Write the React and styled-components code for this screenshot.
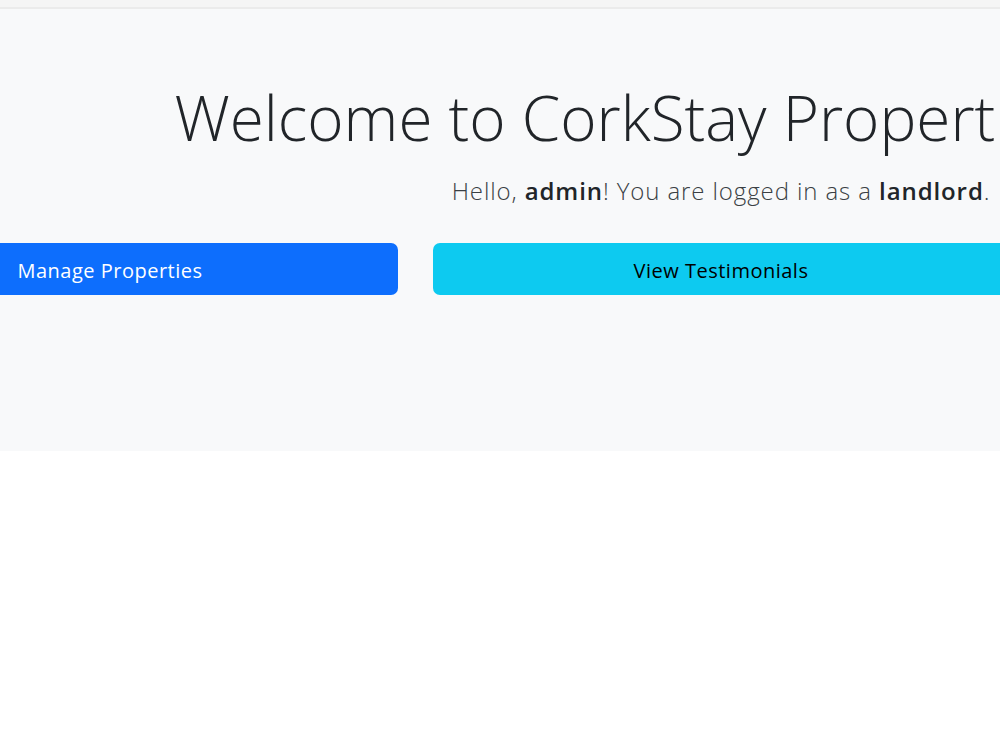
import React from "react";
import styled, { createGlobalStyle } from "styled-components";

const Global = createGlobalStyle`
  html, body { margin: 0; padding: 0; overflow: hidden; background: #ffffff; }
  body { font-family: "Open Sans", "Noto Sans", "Liberation Sans", sans-serif; color: #212529; }
  * { box-sizing: border-box; }
`;

const Page = styled.div`
  width: 1442px;
  display: flex;
  flex-direction: column;
`;

const TopBar = styled.div`
  height: 9px;
  background: #f5f5f5;
  border-bottom: 2px solid #ebebeb;
`;

const Hero = styled.section`
  background: #f8f9fa;
  padding: 71px 0 156px;
  display: flex;
  flex-direction: column;
  align-items: center;
  text-align: center;
`;

const Title = styled.h1`
  margin: 0;
  font-size: 62px;
  font-weight: 300;
  line-height: 1.2;
  color: #212529;
  white-space: nowrap;
`;

const Lead = styled.p`
  margin: 19px 0 0;
  font-size: 24px;
  font-weight: 300;
  line-height: 1.5;
  letter-spacing: 0.9px;
  color: #3a3f44;
  white-space: nowrap;

  strong {
    font-weight: 600;
    color: #212529;
  }
`;

const ButtonRow = styled.div`
  align-self: stretch;
  margin-top: 34px;
  display: flex;
  justify-content: center;
`;

const ButtonGrid = styled.div`
  flex: none;
  width: 1798px;
  display: grid;
  grid-template-columns: repeat(3, 576px);
  column-gap: 35px;
`;

const ActionButton = styled.a`
  display: flex;
  align-items: center;
  justify-content: center;
  height: 52px;
  border-radius: 7px;
  font-size: 20px;
  font-weight: 400;
  letter-spacing: 0.5px;
  padding-top: 2px;
  text-decoration: none;
  background: ${(p) => (p.$variant === "info" ? "#0dcaf0" : "#0d6efd")};
  color: ${(p) => (p.$variant === "info" ? "#000000" : "#ffffff")};
`;

export default function App() {
  return (
    <>
      <Global />
      <Page>
        <TopBar />
        <Hero>
          <Title>Welcome to CorkStay Properties Portal!</Title>
          <Lead>
            Hello, <strong>admin</strong>! You are logged in as a <strong>landlord</strong>.
          </Lead>
          <ButtonRow>
            <ButtonGrid>
              <ActionButton href="#" $variant="primary">Manage Properties</ActionButton>
              <ActionButton href="#" $variant="info">View Testimonials</ActionButton>
            </ButtonGrid>
          </ButtonRow>
        </Hero>
      </Page>
    </>
  );
}
